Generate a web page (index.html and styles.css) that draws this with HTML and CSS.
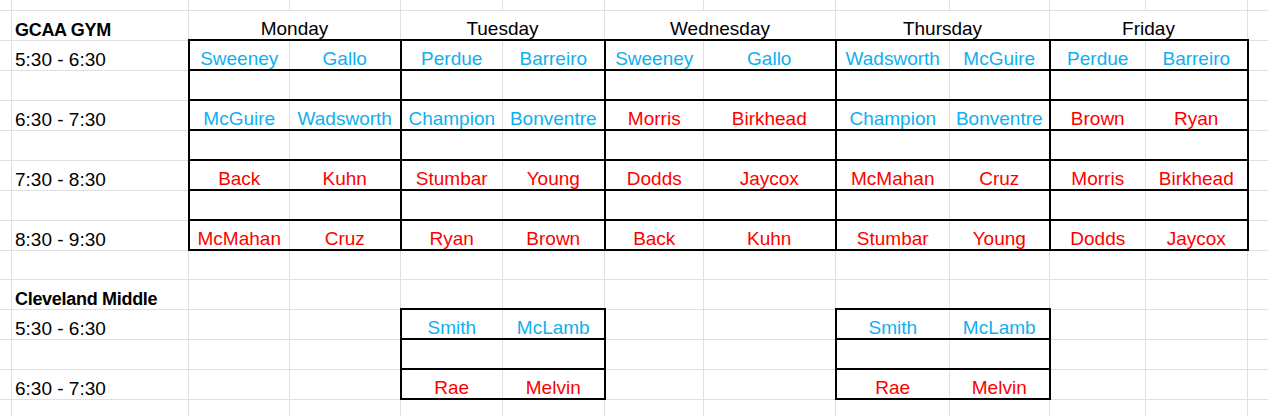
FILE: index.html
```html
<!DOCTYPE html>
<html>
<head>
<meta charset="utf-8">
<link rel="stylesheet" href="styles.css">
</head>
<body>
<table class="sheet">
  <colgroup>
    <col class="c-a"><col class="c-b"><col class="c-c"><col class="c-d"><col class="c-e"><col class="c-f"><col class="c-g"><col class="c-h"><col class="c-i"><col class="c-j"><col class="c-k"><col class="c-l"><col class="c-m">
  </colgroup>
  <tr class="r-top"><td></td><td></td><td></td><td></td><td></td><td></td><td></td><td></td><td></td><td></td><td></td><td></td><td></td></tr>
  <tr>
    <td></td><td class="lbl bold">GCAA GYM</td>
    <td class="day" colspan="2">Monday</td>
    <td class="day" colspan="2">Tuesday</td>
    <td class="day" colspan="2">Wednesday</td>
    <td class="day" colspan="2">Thursday</td>
    <td class="day" colspan="2">Friday</td>
    <td></td>
  </tr>
  <tr>
    <td></td><td class="lbl">5:30 - 6:30</td>
    <td class="bx l blue">Sweeney</td><td class="bx r blue">Gallo</td>
    <td class="bx l blue">Perdue</td><td class="bx r blue">Barreiro</td>
    <td class="bx l blue">Sweeney</td><td class="bx r blue">Gallo</td>
    <td class="bx l blue">Wadsworth</td><td class="bx r blue">McGuire</td>
    <td class="bx l blue">Perdue</td><td class="bx r blue">Barreiro</td>
    <td></td>
  </tr>
  <tr>
    <td></td><td class="lbl"></td>
    <td class="bx l"></td><td class="bx r"></td>
    <td class="bx l"></td><td class="bx r"></td>
    <td class="bx l"></td><td class="bx r"></td>
    <td class="bx l"></td><td class="bx r"></td>
    <td class="bx l"></td><td class="bx r"></td>
    <td></td>
  </tr>
  <tr>
    <td></td><td class="lbl">6:30 - 7:30</td>
    <td class="bx l blue">McGuire</td><td class="bx r blue">Wadsworth</td>
    <td class="bx l blue">Champion</td><td class="bx r blue">Bonventre</td>
    <td class="bx l red">Morris</td><td class="bx r red">Birkhead</td>
    <td class="bx l blue">Champion</td><td class="bx r blue">Bonventre</td>
    <td class="bx l red">Brown</td><td class="bx r red">Ryan</td>
    <td></td>
  </tr>
  <tr>
    <td></td><td class="lbl"></td>
    <td class="bx l"></td><td class="bx r"></td>
    <td class="bx l"></td><td class="bx r"></td>
    <td class="bx l"></td><td class="bx r"></td>
    <td class="bx l"></td><td class="bx r"></td>
    <td class="bx l"></td><td class="bx r"></td>
    <td></td>
  </tr>
  <tr>
    <td></td><td class="lbl">7:30 - 8:30</td>
    <td class="bx l red">Back</td><td class="bx r red">Kuhn</td>
    <td class="bx l red">Stumbar</td><td class="bx r red">Young</td>
    <td class="bx l red">Dodds</td><td class="bx r red">Jaycox</td>
    <td class="bx l red">McMahan</td><td class="bx r red">Cruz</td>
    <td class="bx l red">Morris</td><td class="bx r red">Birkhead</td>
    <td></td>
  </tr>
  <tr>
    <td></td><td class="lbl"></td>
    <td class="bx l"></td><td class="bx r"></td>
    <td class="bx l"></td><td class="bx r"></td>
    <td class="bx l"></td><td class="bx r"></td>
    <td class="bx l"></td><td class="bx r"></td>
    <td class="bx l"></td><td class="bx r"></td>
    <td></td>
  </tr>
  <tr>
    <td></td><td class="lbl">8:30 - 9:30</td>
    <td class="bx l red">McMahan</td><td class="bx r red">Cruz</td>
    <td class="bx l red">Ryan</td><td class="bx r red">Brown</td>
    <td class="bx l red">Back</td><td class="bx r red">Kuhn</td>
    <td class="bx l red">Stumbar</td><td class="bx r red">Young</td>
    <td class="bx l red">Dodds</td><td class="bx r red">Jaycox</td>
    <td></td>
  </tr>
  <tr>
    <td></td><td></td><td></td><td></td><td></td><td></td><td></td><td></td><td></td><td></td><td></td><td></td><td></td>
  </tr>
  <tr>
    <td></td><td class="lbl bold">Cleveland Middle</td><td></td><td></td><td></td><td></td><td></td><td></td><td></td><td></td><td></td><td></td><td></td>
  </tr>
  <tr>
    <td></td><td class="lbl">5:30 - 6:30</td><td></td><td></td>
    <td class="bx l blue">Smith</td><td class="bx r blue">McLamb</td>
    <td></td><td></td>
    <td class="bx l blue">Smith</td><td class="bx r blue">McLamb</td>
    <td></td><td></td><td></td>
  </tr>
  <tr>
    <td></td><td class="lbl"></td><td></td><td></td>
    <td class="bx l"></td><td class="bx r"></td>
    <td></td><td></td>
    <td class="bx l"></td><td class="bx r"></td>
    <td></td><td></td><td></td>
  </tr>
  <tr>
    <td></td><td class="lbl">6:30 - 7:30</td><td></td><td></td>
    <td class="bx l red">Rae</td><td class="bx r red">Melvin</td>
    <td></td><td></td>
    <td class="bx l red">Rae</td><td class="bx r red">Melvin</td>
    <td></td><td></td><td></td>
  </tr>
  <tr>
    <td></td><td></td><td></td><td></td><td></td><td></td><td></td><td></td><td></td><td></td><td></td><td></td><td></td>
  </tr>
</table>
</body>
</html>
```

FILE: styles.css
```css
html, body {
  margin: 0;
  padding: 0;
  background: #ffffff;
  overflow: hidden;
}

.sheet {
  border-collapse: collapse;
  table-layout: fixed;
  width: 1288px;
  margin-left: -1px;
  font-family: "Liberation Sans", Arial, sans-serif;
  font-size: 19px;
  color: #000000;
}

.c-a { width: 12px; }
.c-b { width: 177px; }
.c-c { width: 101px; }
.c-d { width: 111px; }
.c-e { width: 102px; }
.c-f { width: 102px; }
.c-g { width: 99px; }
.c-h { width: 132px; }
.c-i { width: 114px; }
.c-j { width: 100px; }
.c-k { width: 96px; }
.c-l { width: 102px; }
.c-m { width: 40px; }

.sheet td {
  border: 1px solid #e0e0e0;
  height: 28px;
  padding: 0 2px 0 2px;
  line-height: 20px;
  vertical-align: bottom;
  white-space: nowrap;
  overflow: hidden;
  text-align: center;
}

.sheet .r-top td {
  height: 10px;
  border-top: none;
}

.sheet td.lbl {
  text-align: left;
  padding-left: 3px;
}

.sheet td.bold {
  font-weight: bold;
  font-size: 18px;
  letter-spacing: -0.3px;
}

.sheet td.day {
  text-align: center;
}

.sheet td.bx {
  border-top: 2px solid #000000;
  border-bottom: 2px solid #000000;
}

.sheet td.bx.l {
  border-left: 2px solid #000000;
}

.sheet td.bx.r {
  border-right: 2px solid #000000;
}

.blue { color: #0fb0f0; }
.red { color: #ff0000; }
```
